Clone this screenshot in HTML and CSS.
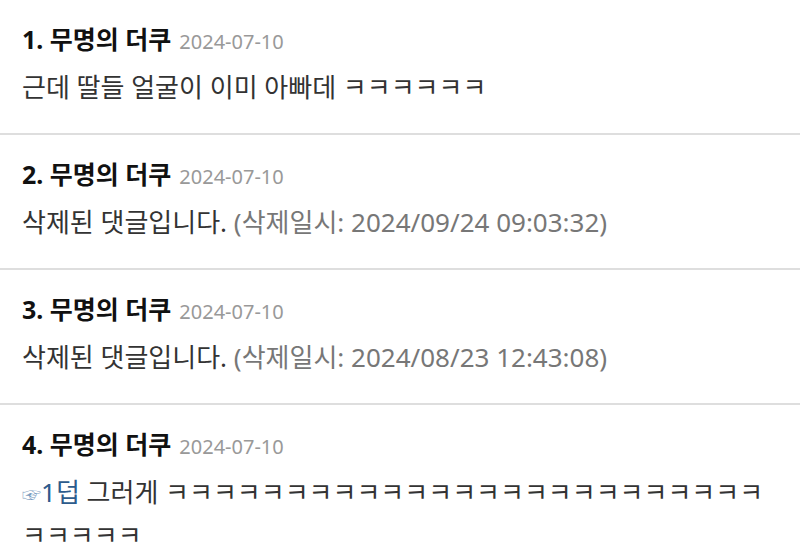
FILE: index.html
```html
<!DOCTYPE html>
<html lang="ko">
<head>
    <meta charset="UTF-8">
    <meta name="viewport" content="width=device-width, initial-scale=1.0">
    <title>댓글</title>
    <link rel="stylesheet" href="styles.css">
</head>
<body>
    <ul class="commentList">
        <li class="comment">
            <div class="commentHead">
                <span class="writer">1. 무명의 더쿠</span>
                <span class="date">2024-07-10</span>
            </div>
            <div class="commentBody">근데 딸들 얼굴이 이미 아빠데 ㅋㅋㅋㅋㅋㅋ</div>
        </li>
        <li class="comment">
            <div class="commentHead">
                <span class="writer">2. 무명의 더쿠</span>
                <span class="date">2024-07-10</span>
            </div>
            <div class="commentBody">삭제된 댓글입니다. <span class="deleted">(삭제일시: 2024/09/24 09:03:32)</span></div>
        </li>
        <li class="comment">
            <div class="commentHead">
                <span class="writer">3. 무명의 더쿠</span>
                <span class="date">2024-07-10</span>
            </div>
            <div class="commentBody">삭제된 댓글입니다. <span class="deleted">(삭제일시: 2024/08/23 12:43:08)</span></div>
        </li>
        <li class="comment">
            <div class="commentHead">
                <span class="writer">4. 무명의 더쿠</span>
                <span class="date">2024-07-10</span>
            </div>
            <div class="commentBody"><a class="reply" href="#"><span class="hand">☞</span>1덥</a> 그러게 ㅋㅋㅋㅋㅋㅋㅋㅋㅋㅋㅋㅋㅋㅋㅋㅋㅋㅋㅋㅋㅋㅋㅋㅋㅋㅋㅋㅋㅋㅋ</div>
        </li>
    </ul>
</body>
</html>
```

FILE: styles.css
```css
body {
    margin: 0;
    background: #fff;
    font-family: "Noto Sans", "Noto Sans CJK KR", sans-serif;
    color: #333;
}
.commentList {
    list-style: none;
    margin: 0;
    padding: 0;
}
.comment {
    padding: 22px 30px 26px 22px;
    border-bottom: 2px solid #dedede;
}
.commentHead {
    display: flex;
    align-items: baseline;
    gap: 8px;
    height: 34px;
    line-height: 34px;
}
.writer {
    font-size: 25px;
    font-weight: bold;
    color: #111;
}
.date {
    font-size: 20px;
    color: #999;
}
.commentBody {
    margin-top: 11px;
    font-size: 26px;
    line-height: 40px;
    color: #333;
}
.deleted {
    color: #777;
}
.reply {
    color: #2d5b8c;
    text-decoration: none;
}
.hand {
    font-size: 19px;
    color: #7b9cc0;
}
```
